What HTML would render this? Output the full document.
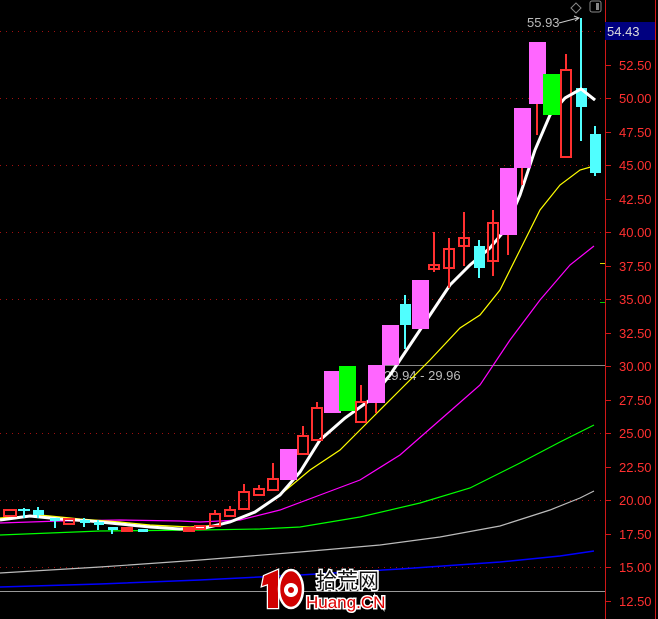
<!DOCTYPE html>
<html><head><meta charset="utf-8"><style>
html,body{margin:0;padding:0;background:#000;width:658px;height:619px;overflow:hidden}
svg{display:block}
text{font-family:"Liberation Sans",sans-serif}
</style></head><body>
<svg width="658" height="619" viewBox="0 0 658 619" xmlns="http://www.w3.org/2000/svg">
<rect width="658" height="619" fill="#000"/>
<g stroke="#a01010" stroke-dasharray="1,5" stroke-width="1">
<line x1="0" y1="31.5" x2="605" y2="31.5"/>
<line x1="0" y1="98.5" x2="605" y2="98.5"/>
<line x1="0" y1="165.5" x2="605" y2="165.5"/>
<line x1="0" y1="232.5" x2="605" y2="232.5"/>
<line x1="0" y1="299.5" x2="605" y2="299.5"/>
<line x1="0" y1="433.5" x2="605" y2="433.5"/>
<line x1="0" y1="500.5" x2="605" y2="500.5"/>
<line x1="0" y1="567.5" x2="605" y2="567.5"/>
</g>
<line x1="385" y1="365.5" x2="605" y2="365.5" stroke="#888" stroke-width="1"/>
<line x1="0" y1="591.5" x2="605" y2="591.5" stroke="#999" stroke-width="1"/>
<text x="384" y="380" fill="#bbb" font-size="13">29.94 - 29.96</text>
<line x1="605.5" y1="0" x2="605.5" y2="619" stroke="#d01818"/>
<line x1="655.5" y1="0" x2="655.5" y2="619" stroke="#d01818"/>
<g stroke="#d01818">
<line x1="605" y1="65.5" x2="611" y2="65.5"/><line x1="605" y1="98.5" x2="611" y2="98.5"/>
<line x1="605" y1="132.5" x2="611" y2="132.5"/><line x1="605" y1="165.5" x2="611" y2="165.5"/>
<line x1="605" y1="199.5" x2="611" y2="199.5"/><line x1="605" y1="232.5" x2="611" y2="232.5"/>
<line x1="605" y1="266.5" x2="611" y2="266.5"/><line x1="605" y1="299.5" x2="611" y2="299.5"/>
<line x1="605" y1="333.5" x2="611" y2="333.5"/><line x1="605" y1="366.5" x2="611" y2="366.5"/>
<line x1="605" y1="400.5" x2="611" y2="400.5"/><line x1="605" y1="433.5" x2="611" y2="433.5"/>
<line x1="605" y1="467.5" x2="611" y2="467.5"/><line x1="605" y1="500.5" x2="611" y2="500.5"/>
<line x1="605" y1="534.5" x2="611" y2="534.5"/><line x1="605" y1="567.5" x2="611" y2="567.5"/>
<line x1="605" y1="601.5" x2="611" y2="601.5"/>
</g>
<g fill="#ff3030" font-size="13">
<text x="619" y="70">52.50</text><text x="619" y="103">50.00</text>
<text x="619" y="137">47.50</text><text x="619" y="170">45.00</text>
<text x="619" y="204">42.50</text><text x="619" y="237">40.00</text>
<text x="619" y="271">37.50</text><text x="619" y="304">35.00</text>
<text x="619" y="338">32.50</text><text x="619" y="371">30.00</text>
<text x="619" y="405">27.50</text><text x="619" y="438">25.00</text>
<text x="619" y="472">22.50</text><text x="619" y="505">20.00</text>
<text x="619" y="539">17.50</text><text x="619" y="572">15.00</text>
<text x="619" y="606">12.50</text>
</g>
<line x1="600" y1="263.5" x2="605" y2="263.5" stroke="#dddd00"/>
<line x1="600" y1="302.5" x2="605" y2="302.5" stroke="#00cc00"/>
<rect x="605" y="22" width="50" height="18" fill="#000080"/>
<text x="607" y="36" fill="#ddd" font-size="13">54.43</text>
<path d="M576 3 L581 8 L576 13 L571 8 Z" fill="none" stroke="#888"/>
<rect x="590" y="1" width="11" height="11" rx="2" fill="none" stroke="#888"/>
<rect x="596" y="3" width="3" height="7" fill="#888"/>
<text x="527" y="27" fill="#bbb" font-size="13">55.93</text>
<path d="M559 23 L578 18" stroke="#ccc" fill="none"/>
<path d="M574 16 L579 18 L575 21" stroke="#ccc" fill="none"/>
<polyline fill="none" stroke="#0000ff" stroke-width="1.5" points="0,587 100,584 200,580 300,575 400,569 500,562 560,556 594,551"/>
<polyline fill="none" stroke="#bbb" stroke-width="1.2" points="0,573 100,567 200,560 300,552 380,545 440,537 500,526 550,510 580,498 594,491"/>
<polyline fill="none" stroke="#00ff00" stroke-width="1.2" points="0,535 50,533 100,531 200,530 260,529 300,527 360,517 420,503 470,488 520,463 560,442 594,425"/>
<polyline fill="none" stroke="#ff00ff" stroke-width="1.2" points="0,523 60,521 120,520 180,521 200,522 240,520 280,510 320,495 360,480 400,455 440,420 480,385 510,340 540,300 570,265 594,246"/>
<polyline fill="none" stroke="#ffff00" stroke-width="1.2" points="0,518 40,515 80,519 120,522 150,525 190,527 220,525 250,515 280,495 310,470 340,450 370,420 400,390 430,360 460,328 480,315 500,290 520,250 540,210 560,185 580,170 594,166"/>
<polyline fill="none" stroke="#fff" stroke-width="3" points="0,520 30,516 60,519 90,521 120,524 150,527 180,529 205,528 230,522 255,512 280,495 300,472 320,440 345,418 370,400 390,375 410,345 430,315 450,285 470,265 490,248 505,230 520,195 535,150 550,115 565,98 581,89 595,100"/>
<g stroke-width="2">
<rect x="4" y="510" width="12" height="6" fill="none" stroke="#ff3030"/>
<path d="M24 508 V518 M18 510 H30" stroke="#50ffff"/>
<rect x="33" y="510" width="11" height="5" fill="#50ffff"/><line x1="38" y1="507" x2="38" y2="518" stroke="#50ffff"/>
<rect x="50" y="518" width="10" height="3" fill="#50ffff"/><line x1="55" y1="518" x2="55" y2="528" stroke="#50ffff"/>
<rect x="64" y="519" width="10" height="5" fill="none" stroke="#ff3030"/>
<rect x="80" y="520" width="10" height="3" fill="#50ffff"/><line x1="84" y1="518" x2="84" y2="527" stroke="#50ffff"/>
<rect x="94" y="522" width="10" height="3" fill="#50ffff"/><line x1="98" y1="520" x2="98" y2="530" stroke="#50ffff"/>
<rect x="108" y="527" width="10" height="3" fill="#50ffff"/><line x1="112" y1="527" x2="112" y2="534" stroke="#50ffff"/>
<rect x="122" y="528" width="10" height="3" fill="#ff3030" stroke="#ff3030"/>
<rect x="138" y="529" width="10" height="3" fill="#50ffff"/>
<rect x="184" y="528" width="10" height="3" fill="#ff3030" stroke="#ff3030"/>
<rect x="195" y="526" width="10" height="3" fill="none" stroke="#ff3030"/>
<rect x="210" y="514" width="10" height="12" fill="none" stroke="#ff3030"/><line x1="215" y1="510" x2="215" y2="514" stroke="#ff3030"/>
<rect x="225" y="510" width="10" height="6" fill="none" stroke="#ff3030"/><line x1="230" y1="506" x2="230" y2="510" stroke="#ff3030"/>
<rect x="239" y="492" width="10" height="17" fill="none" stroke="#ff3030"/><line x1="244" y1="484" x2="244" y2="492" stroke="#ff3030"/>
<rect x="254" y="489" width="10" height="6" fill="none" stroke="#ff3030"/><line x1="259" y1="485" x2="259" y2="489" stroke="#ff3030"/>
<rect x="268" y="479" width="10" height="11" fill="none" stroke="#ff3030"/><line x1="273" y1="463" x2="273" y2="479" stroke="#ff3030"/>
<rect x="280" y="449" width="17" height="31" fill="#ff66ff"/>
<rect x="298" y="436" width="10" height="18" fill="none" stroke="#ff3030"/><line x1="303" y1="426" x2="303" y2="436" stroke="#ff3030"/>
<rect x="312" y="408" width="10" height="32" fill="none" stroke="#ff3030"/><line x1="317" y1="402" x2="317" y2="408" stroke="#ff3030"/>
<rect x="324" y="371" width="17" height="42" fill="#ff66ff"/>
<rect x="339" y="366" width="17" height="45" fill="#00ff00"/>
<rect x="356" y="402" width="10" height="20" fill="none" stroke="#ff3030"/><line x1="361" y1="385" x2="361" y2="402" stroke="#ff3030"/>
<rect x="368" y="365" width="17" height="38" fill="#ff66ff"/><line x1="376" y1="403" x2="376" y2="413" stroke="#ff3030"/>
<rect x="382" y="325" width="17" height="40" fill="#ff66ff"/>
<rect x="400" y="304" width="11" height="21" fill="#50ffff" stroke="none"/><line x1="405" y1="295" x2="405" y2="349" stroke="#50ffff"/>
<rect x="412" y="280" width="17" height="49" fill="#ff66ff"/>
<rect x="429" y="265" width="10" height="4" fill="none" stroke="#ff3030"/><line x1="434" y1="232" x2="434" y2="272" stroke="#ff3030"/>
<rect x="444" y="249" width="10" height="19" fill="none" stroke="#ff3030"/><line x1="449" y1="238" x2="449" y2="288" stroke="#ff3030"/>
<rect x="459" y="238" width="10" height="8" fill="none" stroke="#ff3030"/><line x1="464" y1="212" x2="464" y2="266" stroke="#ff3030"/>
<rect x="474" y="246" width="11" height="22" fill="#50ffff"/><line x1="479" y1="240" x2="479" y2="278" stroke="#50ffff"/>
<rect x="488" y="223" width="10" height="38" fill="none" stroke="#ff3030"/><line x1="493" y1="210" x2="493" y2="276" stroke="#ff3030"/>
<rect x="500" y="168" width="17" height="67" fill="#ff66ff"/><line x1="508" y1="235" x2="508" y2="255" stroke="#ff3030"/>
<rect x="514" y="108" width="17" height="60" fill="#ff66ff"/><line x1="522" y1="168" x2="522" y2="185" stroke="#ff3030"/>
<rect x="529" y="42" width="17" height="62" fill="#ff66ff"/><line x1="537" y1="104" x2="537" y2="135" stroke="#ff3030"/>
<rect x="543" y="74" width="17" height="41" fill="#00ff00"/>
<rect x="561" y="70" width="10" height="87" fill="none" stroke="#ff3030"/><line x1="566" y1="54" x2="566" y2="70" stroke="#ff3030"/>
<rect x="576" y="88" width="11" height="19" fill="#50ffff"/><line x1="581" y1="18" x2="581" y2="141" stroke="#50ffff"/>
<rect x="590" y="134" width="11" height="39" fill="#50ffff"/><line x1="595" y1="126" x2="595" y2="176" stroke="#50ffff"/>
</g>
<polyline fill="none" stroke="#fff" stroke-width="3" points="565,98 581,89 595,100"/>
<!-- logo -->
<path d="M264 576 L278 570 L278 608 L268 608 L268 584 L262 586 Z" fill="#d00000" stroke="#fff" stroke-width="2.5" paint-order="stroke"/>
<ellipse cx="291" cy="589" rx="12" ry="19" fill="#d00000" stroke="#fff" stroke-width="2.5"/>
<circle cx="291" cy="590" r="7" fill="#fff"/>
<circle cx="291" cy="590" r="3" fill="#d00000"/>
<text x="316" y="588" font-size="21" fill="#111" stroke="#fff" stroke-width="3" paint-order="stroke" font-family="'Liberation Sans','Noto Sans CJK SC',sans-serif">拾荒网</text>
<text x="306" y="608" font-size="17" fill="#e00000" stroke="#fff" stroke-width="3" paint-order="stroke">Huang.CN</text>
</svg>
</body></html>
